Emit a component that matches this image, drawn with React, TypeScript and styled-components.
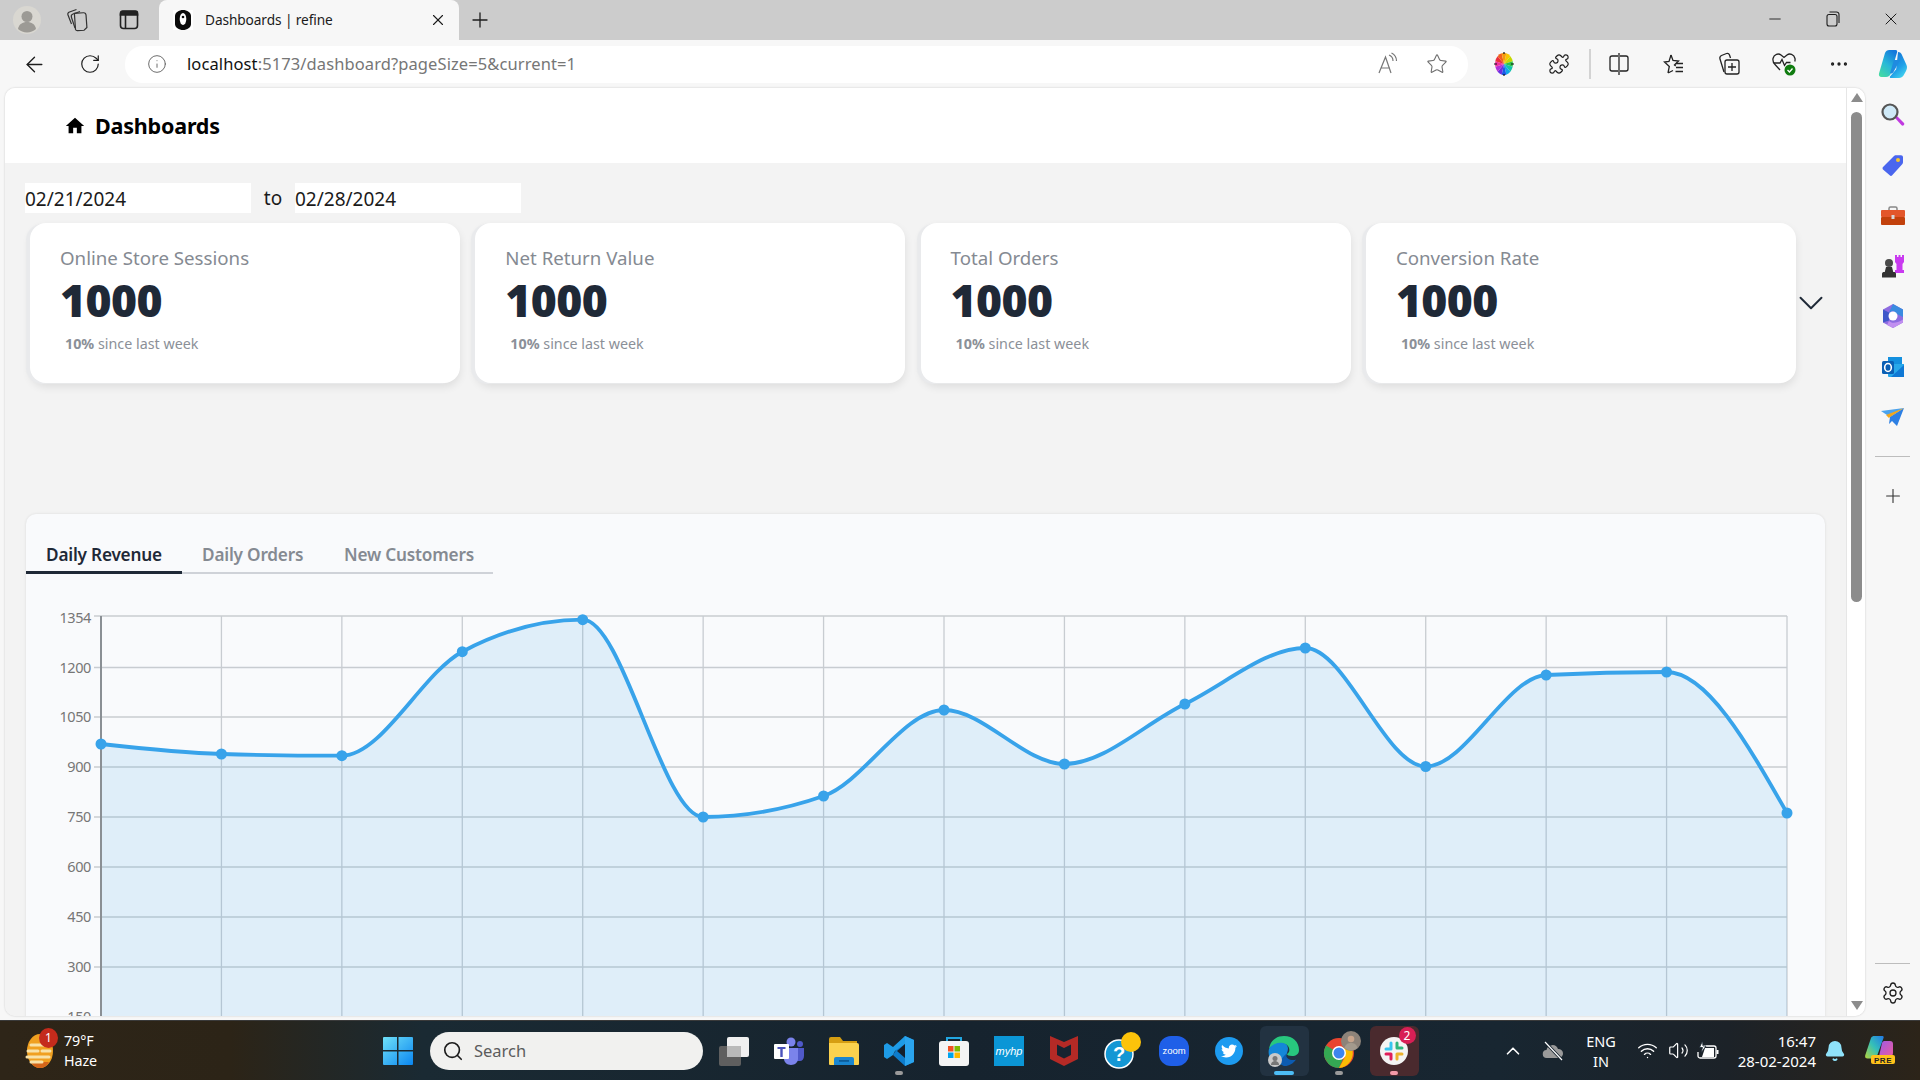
import * as React from 'react';
import styled, { createGlobalStyle } from 'styled-components';
import {
  ArrowLeft, RotateCw, Info, Star, Plus, X, Minus, MoreHorizontal, Search, ChevronDown,
  ChevronUp, Settings, Wifi, Volume2, Bell, Puzzle,
} from 'lucide-react';
import { MdHome } from 'react-icons/md';
import { FaTwitter } from 'react-icons/fa';

const UI_FONT = `"Noto Sans", "Open Sans", "Liberation Sans", sans-serif`;

const GlobalStyle = createGlobalStyle`
  html, body { margin: 0; padding: 0; overflow: hidden; background: #f7f7f7; }
  * { box-sizing: border-box; }
  body { font-family: ${UI_FONT}; }
`;

const Desktop = styled.div`
  width: 1920px;
  height: 1080px;
  display: flex;
  flex-direction: column;
  overflow: hidden;
`;

/* browser chrome */
const TabStrip = styled.div`
  height: 40px;
  flex: none;
  display: flex;
  background: #cccccc;
`;

const Slot = styled.div<{ $w: number }>`
  width: ${(p) => p.$w}px;
  flex: none;
  display: flex;
  align-items: center;
  justify-content: center;
  color: #1d1d1d;
`;

const BrowserTab = styled.div`
  width: 300px;
  margin-left: 1px;
  display: flex;
  align-items: center;
  padding: 0 12px 0 14px;
  background: #f7f7f7;
  border-radius: 8px 8px 0 0;
`;

const TabTitle = styled.span`
  flex: 1;
  margin-left: 12px;
  padding-bottom: 2px;
  font-size: 13.7px;
  color: #1b1b1b;
  letter-spacing: -0.1px;
`;

const WindowControls = styled.div`
  margin-left: auto;
  display: flex;
  padding-bottom: 3px;
`;

const Toolbar = styled.div`
  height: 48px;
  flex: none;
  display: flex;
  align-items: center;
  padding-left: 7px;
  background: #f7f7f7;
`;

const AddressBar = styled.div`
  width: 1343px;
  height: 37px;
  margin: 0 8.5px 0 8px;
  display: flex;
  align-items: center;
  padding: 0 6px 0 22px;
  background: #ffffff;
  border-radius: 18px;
`;

const Url = styled.div`
  flex: 1;
  margin-left: 20px;
  padding-bottom: 2px;
  font-size: 16.5px;
  letter-spacing: 0.1px;
  color: #767676;
  span { color: #111111; }
`;

const AddressAction = styled.div`
  width: 49px;
  display: flex;
  justify-content: center;
  color: #6e6e6e;
`;

const ToolbarDivider = styled.div`
  width: 5px;
  height: 30px;
  flex: none;
  display: flex;
  justify-content: flex-end;
  &::after {
    content: '';
    width: 2px;
    background: #d3d3d3;
  }
`;

/* main area */
const Main = styled.div`
  flex: 1;
  min-height: 0;
  display: flex;
  padding-left: 5px;
  background: #f7f7f7;
`;

const Viewport = styled.div`
  width: 1860px;
  height: 928px;
  flex: none;
  display: flex;
  overflow: hidden;
  border-radius: 10px;
  box-shadow: 0 0 2px rgba(0, 0, 0, 0.22);
`;

const Page = styled.div`
  width: 1841px;
  flex: none;
  background: #f3f3f3;
  overflow: hidden;
`;

const PageHeader = styled.header`
  height: 75px;
  display: flex;
  align-items: center;
  gap: 9px;
  padding-left: 59px;
  background: #ffffff;
  color: #000000;
`;

const PageTitle = styled.h1`
  margin: 0;
  font-size: 21.5px;
  font-weight: 700;
  letter-spacing: -0.2px;
`;

const PageBody = styled.main`
  padding: 20px 0 0 20px;
`;

const DateRow = styled.div`
  display: flex;
  align-items: center;
  height: 30px;
`;

const DateField = styled.div`
  width: 226px;
  height: 30px;
  line-height: 32px;
  background: #ffffff;
  font-size: 19px;
  color: #1b1b1b;
`;

const DateSeparator = styled.span`
  width: 44px;
  text-align: center;
  font-size: 19px;
  line-height: 32px;
  color: #1b1b1b;
`;

const StatsRow = styled.div`
  display: flex;
  align-items: center;
  gap: 15.3px;
  margin: 10px 0 0 5px;
`;

const StatCard = styled.section`
  width: 430px;
  height: 160px;
  flex: none;
  padding: 22px 0 0 30px;
  background: #ffffff;
  border-radius: 16px;
  box-shadow: -4px 1px 1px #e9eaec, 0 4px 9px rgba(0, 0, 0, 0.09);
`;

const StatTitle = styled.div`
  height: 26px;
  line-height: 26px;
  font-size: 18.7px;
  color: #858a92;
`;

const StatValue = styled.div`
  height: 52px;
  margin-top: 3px;
  line-height: 52px;
  font-size: 44.5px;
  font-weight: 900;
  letter-spacing: -0.6px;
  color: #1f2937;
`;

const StatNote = styled.div`
  height: 20px;
  margin: 8px 0 0 5px;
  line-height: 20px;
  font-size: 14.3px;
  color: #8b9098;
  b { font-weight: 700; }
`;

const StatsToggle = styled.div`
  width: 24px;
  margin-left: -12.5px;
  display: flex;
  justify-content: center;
  color: #1f2937;
  svg { flex: none; }
`;

const ChartCard = styled.section`
  width: 1799px;
  height: 560px;
  margin: 131px 0 0 1px;
  padding-top: 20px;
  background: #f9fafc;
  border-radius: 10px;
  box-shadow: 0 0 3px rgba(0, 0, 0, 0.1);
`;

const TabList = styled.div`
  width: 467px;
  height: 40px;
  display: flex;
  border-bottom: 2px solid #cfd2d8;
`;

const ChartTab = styled.div<{ $active?: boolean; $w: number }>`
  width: ${(p) => p.$w}px;
  height: 40px;
  flex: none;
  padding-left: 20px;
  line-height: 41px;
  white-space: nowrap;
  font-size: 17.2px;
  font-weight: 600;
  letter-spacing: -0.2px;
  color: ${(p) => (p.$active ? '#1f2937' : '#858a92')};
  border-bottom: 3px solid ${(p) => (p.$active ? '#1f2937' : 'transparent')};
`;

const ChartWrap = styled.div`
  margin-top: 22px;
  svg { display: block; }
`;

/* scrollbar + edge sidebar */
const ScrollTrack = styled.div`
  position: relative;
  width: 19px;
  flex: none;
  background: #ffffff;
  border-left: 1px solid #e6e6e6;
`;

const ScrollArrow = styled.div<{ $down?: boolean }>`
  position: absolute;
  left: 4px;
  ${(p) => (p.$down ? 'bottom: 6px;' : 'top: 5px;')}
  width: 0;
  height: 0;
  border-left: 6px solid transparent;
  border-right: 6px solid transparent;
  ${(p) => (p.$down ? 'border-top: 9px solid #8c8c8c;' : 'border-bottom: 9px solid #8c8c8c;')}
`;

const ScrollThumb = styled.div`
  position: absolute;
  top: 24px;
  left: 4px;
  width: 11px;
  height: 490px;
  border-radius: 6px;
  background: #8c8c8c;
`;

const EdgeSidebar = styled.aside`
  width: 55px;
  flex: none;
  display: flex;
  flex-direction: column;
  align-items: center;
  padding: 2px 0;
`;

const SideItem = styled.div`
  height: 50.3px;
  flex: none;
  display: flex;
  align-items: center;
  justify-content: center;
`;

const SideDivider = styled.div<{ $last?: boolean }>`
  width: 35px;
  height: 1px;
  flex: none;
  margin: ${(p) => (p.$last ? 'auto 0 4px' : '14px 0 14px')};
  background: #bdbdbd;
`;

/* taskbar */
const Taskbar = styled.footer`
  height: 60px;
  flex: none;
  display: flex;
  align-items: center;
  border-top: 1px solid #3a3a3a;
  color: #ffffff;
  background: linear-gradient(90deg, #2e2518 0%, #2c2417 12%, #1a2a33 22%, #16232e 50%, #182631 78%, #1c2228 90%, #2c2419 100%);
`;

const Weather = styled.div`
  position: relative;
  width: 370px;
  flex: none;
  height: 59px;
  display: flex;
  align-items: center;
  padding-left: 25px;
  gap: 11px;
`;

const WeatherBadge = styled.span`
  position: absolute;
  left: 39px;
  top: 7px;
  width: 19px;
  height: 20px;
  border-radius: 50%;
  background: #c42b1c;
  font-size: 12px;
  line-height: 20px;
  text-align: center;
`;

const WeatherText = styled.div`
  font-size: 14.3px;
  line-height: 20px;
  letter-spacing: -0.1px;
`;

const SearchPill = styled.div`
  width: 273px;
  height: 38px;
  flex: none;
  margin: 0 3.5px 0 5px;
  display: flex;
  align-items: center;
  gap: 10px;
  padding-left: 12px;
  border-radius: 19px;
  background: #f1f1ef;
  color: #1c1c1c;
  font-size: 16.5px;
  span { color: #5c5c5c; }
`;

const TaskItem = styled.div<{ $tile?: string; $mark?: string }>`
  position: relative;
  width: 55px;
  height: 50px;
  flex: none;
  display: flex;
  align-items: center;
  justify-content: center;
  &::before {
    content: '';
    position: absolute;
    inset: 0 3px;
    border-radius: 6px;
    background: ${(p) => p.$tile || 'transparent'};
  }
  &::after {
    content: '';
    position: absolute;
    bottom: 1px;
    left: 50%;
    width: ${(p) => (p.$tile === '#223241' ? 20 : 8)}px;
    height: 4px;
    transform: translateX(-50%);
    border-radius: 2px;
    background: ${(p) => p.$mark || 'transparent'};
  }
  svg { position: relative; flex: none; }
`;

const SlackBadge = styled.span`
  position: absolute;
  top: 1px;
  right: 6px;
  width: 17px;
  height: 17px;
  border-radius: 50%;
  background: #d81f55;
  font-size: 12px;
  line-height: 17px;
  text-align: center;
`;

const Tray = styled.div`
  margin-left: 68.5px;
  display: flex;
  align-items: center;
  color: #ffffff;
`;

const TrayItem = styled.div<{ $w: number }>`
  width: ${(p) => p.$w}px;
  flex: none;
  display: flex;
  align-items: center;
  justify-content: center;
`;

const TrayText = styled.div<{ $w: number; $right?: boolean }>`
  width: ${(p) => p.$w}px;
  flex: none;
  font-size: ${(p) => (p.$right ? 15 : 14.5)}px;
  line-height: 20px;
  white-space: nowrap;
  text-align: ${(p) => (p.$right ? 'right' : 'center')};
`;

/* drawings */
const Avatar = () => (
  <svg width="28" height="28" viewBox="0 0 28 28">
    <circle cx="14" cy="14" r="14" fill="#d9d7d1" />
    <circle cx="14" cy="10.5" r="5.5" fill="#9c9a95" />
    <path d="M5 23c1-5 4.5-7 9-7s8 2 9 7a13.5 13.5 0 0 1-18 0z" fill="#9c9a95" />
  </svg>
);

const WorkspacesIcon = () => (
  <svg width="22" height="24" viewBox="0 0 22 24" fill="none" stroke="#333" strokeWidth="1.2">
    <path d="M9 5h9a2.500 2.500 0 0 1 2.500 2.500V20l-3 2.500H11a2 2 0 0 1-2-1.500z" transform="rotate(-4 14 14)" />
    <path d="M9 20 5.500 9.500C5 8 5.500 6.500 7 6l7-2.500" />
    <path d="M5.500 16 2 7C1.500 5.500 2 4.500 3.500 4l7-2.500" />
  </svg>
);

const TabsIcon = () => (
  <svg width="20" height="20" viewBox="0 0 20 20" fill="none" stroke="#222" strokeWidth="1.6">
    <rect x="1.500" y="1.500" width="17" height="17" rx="3" />
    <path d="M1.500 5h17V3a2 2 0 0 0-2-2h-13a2 2 0 0 0-2 2z" fill="#222" />
    <path d="M6.500 5v13" />
  </svg>
);

const RefineLogo = () => (
  <svg width="20" height="20" viewBox="0 0 20 20">
    <rect width="20" height="20" fill="#ffffff" />
    <path d="M10 0c4 0 8 2.500 8 6v8c0 3.500-4 6-8 6s-8-2.500-8-6V6c0-3.500 4-6 8-6z" fill="#0b0b0b" />
    <ellipse cx="10" cy="9" rx="3.300" ry="6" fill="#ffffff" />
    <circle cx="10" cy="7" r="1.300" fill="#0b0b0b" />
  </svg>
);

const RestoreIcon = () => (
  <svg width="14" height="16" viewBox="0 0 14 16" fill="none" stroke="#1d1d1d" strokeWidth="1.1">
    <rect x="1" y="3.500" width="10" height="11.500" rx="2" />
    <path d="M3.500 1h7A2.500 2.500 0 0 1 13 3.500V12" />
  </svg>
);

const ReadAloudIcon = () => (
  <svg width="24" height="24" viewBox="0 0 24 24" fill="none" stroke="#777" strokeWidth="1.2">
    <path d="M3 21 9.500 5 15 21M5 16h9" />
    <path d="M13 3c2.500 1 4 3 4 6M15.500 1c3 1.500 5 4 5 8" />
  </svg>
);

const WHEEL = ['#f7c600', '#c4d800', '#2fc24a', '#11c5a8', '#11a8e8', '#1a5ae8', '#6a2fe0', '#b52fd6', '#f032a0', '#ea2f3c', '#f2601c', '#f59a0a'];

const ColorWheel = () => (
  <svg width="20" height="24" viewBox="-10 -12 20 24">
    {WHEEL.map((c, i) => {
      const a0 = (i * Math.PI) / 6 - Math.PI / 2 + Math.PI / 12;
      const a1 = a0 + Math.PI / 6;
      const pt = (a: number) => `${9 * Math.cos(a)} ${11 * Math.sin(a)}`;
      return <path key={c} d={`M0 0L${pt(a0)}A9 11 0 0 1 ${pt(a1)}Z`} fill={c} />;
    })}
    <path d="M-10 0h3M7 0h3M0-12v2M0 10v2" stroke="#111" strokeWidth="1.200" />
  </svg>
);

const SplitIcon = () => (
  <svg width="20" height="24" viewBox="0 0 20 24" fill="none" stroke="#222" strokeWidth="1.3">
    <path d="M9 4H3a2 2 0 0 0-2 2v11a2 2 0 0 0 2 2h6M11 4h6a2 2 0 0 1 2 2v11a2 2 0 0 1-2 2h-6" />
    <path d="M10 1v22" />
  </svg>
);

const FavoritesIcon = () => (
  <svg width="22" height="22" viewBox="0 0 22 22" fill="none" stroke="#222" strokeWidth="1.3">
    <path d="m8 2 2 5.500 5.500.5-4 4 1.200 1M5 20l1.300-6.500L1.500 9 6 8.500 8 2M5 20l5-2.500" />
    <path d="M13 10.500h7M13 14.500h7M12.500 18.500h7.500" />
  </svg>
);

const CollectionsIcon = () => (
  <svg width="22" height="24" viewBox="0 0 22 24" fill="none" stroke="#222" strokeWidth="1.3">
    <path d="M6 20 2 7c-.4-1.500.3-3 1.500-3.500l5-2c1.300-.4 2.500.2 3 1.500l1 3" />
    <rect x="7" y="8" width="14" height="14" rx="2" />
    <path d="M14 11v8M10 15h8" />
  </svg>
);

const HealthIcon = () => (
  <svg width="24" height="26" viewBox="0 0 24 26">
    <path d="M8 19 3 13.500C1 11.500.7 9.500 1 7.500 2 3 6.500 2 9 4l3 2.500L15 4c2.500-2 7-1 8 3.500.2 1.200.1 2-.2 3" fill="none" stroke="#222" strokeWidth="1.300" />
    <path d="M2 12h6l2-3.500 2.500 6 2-3h4" fill="none" stroke="#222" strokeWidth="1.300" />
    <circle cx="18" cy="19" r="5.500" fill="#107c10" />
    <path d="m15.500 19 2 2 3-3.500" fill="none" stroke="#ffffff" strokeWidth="1.300" />
  </svg>
);

const Copilot = ({ size = 30 }: { size?: number }) => (
  <svg width={size} height={size} viewBox="0 0 30 30">
    <defs>
      <linearGradient id="cpA" x1="0.1" y1="1" x2="0.7" y2="0">
        <stop offset="0" stopColor="#46dca0" />
        <stop offset="0.5" stopColor="#28b8d8" />
        <stop offset="1" stopColor="#1378dc" />
      </linearGradient>
      <linearGradient id="cpB" x1="0.2" y1="0" x2="0.8" y2="1">
        <stop offset="0" stopColor="#1470d4" />
        <stop offset="0.6" stopColor="#1f9fe8" />
        <stop offset="1" stopColor="#46d8ee" />
      </linearGradient>
    </defs>
    <path d="M7 4c.8-2 2.300-3 4.300-3h6.500c1.200 0 1.700 1 1.300 2.200L13 24c-.8 2.500-2.500 4-5 4H3.500C1.500 28 .5 26.500 1 24.500z" fill="url(#cpA)" />
    <path d="M20 3c1.700 0 2.800.8 3.500 2l5 11c.9 2 .5 4-.5 6l-2.500 4.500C24.500 28 23 29 21 29h-8c-1.200 0-1.600-1-.8-1.800l6-7z" fill="url(#cpB)" />
    <path d="M16 11h6l-6.500 12c-1 1.500-2.500 2-3.500 1z" fill="#1f8be0" />
  </svg>
);

const CopilotPre = () => (
  <svg width="30" height="30" viewBox="0 0 30 30">
    <defs>
      <linearGradient id="cpP" x1="0" y1="1" x2="1" y2="0">
        <stop offset="0" stopColor="#b6d63a" />
        <stop offset="0.5" stopColor="#35c0b8" />
        <stop offset="1" stopColor="#2178e6" />
      </linearGradient>
      <linearGradient id="cpQ" x1="0" y1="0" x2="1" y2="1">
        <stop offset="0" stopColor="#9a5be8" />
        <stop offset="1" stopColor="#f05a9c" />
      </linearGradient>
    </defs>
    <path d="M6 2c.7-1.500 2-2 3.500-2H17c1.500 0 2 1 1.500 2L12 20c-.5 1.500-2 2.500-3.500 2.500H2.500C.5 22.500-.3 21 .3 19z" fill="url(#cpP)" />
    <path d="M17 7c.5-1.500 1.500-2 3-2h5c2 0 3 1 3 3v8c0 4-2 6.500-5 6.500h-9.500z" fill="url(#cpQ)" />
    <rect x="6" y="19" width="24" height="9" rx="2" fill="#ffc21a" />
    <text x="18" y="26.500" textAnchor="middle" fontSize="8" fontWeight="800" letterSpacing="0.6" fill="#222" fontFamily="Liberation Sans, sans-serif">PRE</text>
  </svg>
);

const SearchTool = () => (
  <svg width="24" height="24" viewBox="0 0 24 24">
    <path d="m14 15 2-2 7 7c.5.8.3 1.500-.3 2.200-.7.600-1.500.6-2.100 0z" fill="#c03ae0" />
    <circle cx="9" cy="9" r="7.500" fill="#cfe9f7" stroke="#555" strokeWidth="2.200" />
  </svg>
);

const TagTool = () => (
  <svg width="22" height="22" viewBox="0 0 22 22">
    <path d="M1 13 12 2c.5-.5 1-.7 2-.7h5c1.200 0 2 .8 2 2v5c0 .8-.2 1.500-.8 2l-10 11c-.7.8-1.800.8-2.500 0L1 15.500c-.6-.7-.6-1.800 0-2.500z" fill="#4a66ee" />
    <circle cx="16" cy="6" r="2" fill="#f4c430" />
  </svg>
);

const ToolboxTool = () => (
  <svg width="24" height="20" viewBox="0 0 24 20">
    <path d="M8 5V2.500C8 1.500 8.500 1 9.500 1h5c1 0 1.500.5 1.500 1.500V5" fill="none" stroke="#888" strokeWidth="1.500" />
    <rect y="4" width="24" height="7" rx="1" fill="#e3562a" />
    <rect y="11" width="24" height="8" rx="1" fill="#c2410c" />
    <rect x="10.500" y="9" width="3" height="4" fill="#d8d8d8" />
  </svg>
);

const ChessTool = () => (
  <svg width="24" height="24" viewBox="0 0 24 24">
    <path d="M14 1h2v2h1.500V1h2v2H21V1h2v7l-1.500 2v6H23v3h-9v-3h1.500v-6L14 8z" fill="#c93af0" />
    <circle cx="8" cy="9" r="4" fill="#4a4a4a" />
    <path d="M5 13h6l1.500 6h-9zM1 20c0-1.500 1-2 2-2h10c1 0 2 .5 2 2v3.500H1z" fill="#333" />
  </svg>
);

const OfficeTool = () => (
  <svg width="22" height="24" viewBox="0 0 22 24">
    <path d="M11 0 21 5.500v13L11 24 1 18.500v-13z" fill="#8d6ce0" />
    <path d="M11 0 21 5.500V13l-6-3-4-3-4 1.500L11 0z" fill="#3a8be0" />
    <path d="M1 5.500 7 8.500v8l-6 2z" fill="#3f57c9" />
    <path d="M7 17c3 3 8 2 14-1.500v3L11 24l-6-3z" fill="#c18ff0" />
    <circle cx="11" cy="12" r="4.500" fill="#ffffff" />
  </svg>
);

const OutlookTool = () => (
  <svg width="22" height="22" viewBox="0 0 22 22">
    <rect x="6" y="1" width="14" height="8" fill="#1490df" />
    <path d="M6 8h16v13H7a1 1 0 0 1-1-1z" fill="#28a8ea" />
    <path d="M22 9v12H9z" fill="#0f78d4" />
    <rect y="5" width="12" height="13" rx="1.500" fill="#0a5fb4" />
    <ellipse cx="6" cy="11.500" rx="3.300" ry="4" fill="none" stroke="#ffffff" strokeWidth="1.600" />
  </svg>
);

const SendTool = () => (
  <svg width="24" height="20" viewBox="0 0 24 20">
    <path d="M0 4 23 1 9 10z" fill="#4ba3ee" />
    <path d="M23 1 16 19l-5-5-3 3 1-7z" fill="#2d7fe3" />
    <path d="M23 1 5 8l3 3 1-1z" fill="#f2a71b" />
  </svg>
);

const WeatherIcon = () => (
  <svg width="28" height="38" viewBox="0 0 28 38">
    <ellipse cx="15" cy="19" rx="13" ry="17" fill="#f0a020" />
    <path d="M6 30h18c-2 4-5 6-9 6s-7-2-9-6z" fill="#d4651a" />
    <path d="M6 13h17M3 19h10M17 19h8M2 25h22M6 30h11" stroke="#f8e2a8" strokeWidth="3" strokeLinecap="round" />
  </svg>
);

const StartLogo = () => (
  <svg width="30" height="30" viewBox="0 0 30 30">
    <defs>
      <linearGradient id="startG" x1="0" y1="0" x2="1" y2="1">
        <stop offset="0" stopColor="#6fe0f8" />
        <stop offset="1" stopColor="#0a86f0" />
      </linearGradient>
    </defs>
    <path d="M1 1h13v13H0V2a1 1 0 0 1 1-1zM15.500 1H29a1 1 0 0 1 1 1v12H15.500zM0 15.500h14V29H1a1 1 0 0 1-1-1zM15.500 15.500H30V28a1 1 0 0 1-1 1H15.500z" fill="url(#startG)" />
  </svg>
);

const TaskViewIcon = () => (
  <svg width="32" height="30" viewBox="0 0 32 30">
    <rect x="1" y="10" width="22" height="20" rx="2" fill="#5f5f5f" />
    <rect x="9" y="1" width="22" height="20" rx="2" fill="#f0f0f0" />
    <rect x="9" y="10" width="14" height="11" fill="#b9b9b9" />
  </svg>
);

const TeamsIcon = () => (
  <svg width="30" height="28" viewBox="0 0 30 28">
    <circle cx="17" cy="5" r="4.500" fill="#7b83eb" />
    <circle cx="26" cy="7" r="3" fill="#5059c9" />
    <path d="M22 11h8v8c0 3-2 5-4 5h-4z" fill="#5059c9" />
    <path d="M10 11h14v11c0 3-3 6-7 6s-7-3-7-6z" fill="#7b83eb" />
    <rect y="7" width="15" height="15" rx="1" fill="#ffffff" />
    <path d="M3.500 10h8v2H8.700v8H6.300v-8H3.500z" fill="#4b53bc" />
  </svg>
);

const FolderIcon = () => (
  <svg width="30" height="30" viewBox="0 0 30 30">
    <path d="M0 3a2 2 0 0 1 2-2h9l3 4h14v5H0z" fill="#d69e12" />
    <path d="M0 7h28a2 2 0 0 1 2 2v19a1 1 0 0 1-1 1H1a1 1 0 0 1-1-1z" fill="#fbd24e" />
    <path d="M7 21h16a2 2 0 0 1 2 2v6H5v-6a2 2 0 0 1 2-2z" fill="#1a86d0" />
    <rect x="10" y="24" width="10" height="1.800" fill="#0c5c99" />
  </svg>
);

const VSCodeIcon = () => (
  <svg width="30" height="30" viewBox="0 0 30 30">
    <path d="M21 0 30 4v22l-9 4-12-11z" fill="#0d7ccc" />
    <path d="M21 0 9 11 3 7 0 9v12l3 2 6-4 2-4 10-7z" fill="#1e9be6" />
    <path d="M21 8v14l-8-7z" fill="#14202c" />
    <path d="M21 0 30 4v22l-9 4z" fill="#2aa4ee" />
  </svg>
);

const StoreIcon = () => (
  <svg width="30" height="30" viewBox="0 0 30 30">
    <path d="M8 5V2h14v3" fill="none" stroke="#22a6e0" strokeWidth="2" />
    <rect y="5" width="30" height="25" rx="3" fill="#f4f4f4" />
    <rect x="9" y="10" width="5.500" height="5.500" fill="#f25022" />
    <rect x="15.500" y="10" width="5.500" height="5.500" fill="#7fba00" />
    <rect x="9" y="16.500" width="5.500" height="5.500" fill="#00a4ef" />
    <rect x="15.500" y="16.500" width="5.500" height="5.500" fill="#ffb900" />
  </svg>
);

const MyHpIcon = () => (
  <svg width="30" height="30" viewBox="0 0 30 30">
    <rect width="30" height="30" fill="#0b96d6" />
    <text x="15" y="19" textAnchor="middle" fontSize="11" fontStyle="italic" fill="#ffffff" fontFamily="Liberation Sans, sans-serif">myhp</text>
  </svg>
);

const McAfeeIcon = () => (
  <svg width="28" height="30" viewBox="0 0 28 30">
    <path d="M0 0 14 6 28 0v23l-14 7L0 23z" fill="#b52a26" />
    <path d="M7 8.500 14 12l7-3.500V19l-7 3.500L7 19z" fill="#172330" />
  </svg>
);

const HelpIcon = () => (
  <svg width="52" height="46" viewBox="0 0 52 46">
    <circle cx="26" cy="26" r="14" fill="#1497d4" stroke="#ffffff" strokeWidth="1.500" />
    <text x="26" y="33" textAnchor="middle" fontSize="20" fontWeight="700" fill="#ffffff" fontFamily="Liberation Sans, sans-serif">?</text>
    <circle cx="38" cy="14" r="10" fill="#fcc30a" />
  </svg>
);

const ZoomIcon = () => (
  <svg width="30" height="30" viewBox="0 0 30 30">
    <rect width="30" height="30" rx="12" fill="#1f5fe8" />
    <text x="15" y="18" textAnchor="middle" fontSize="9.500" fill="#ffffff" fontFamily="Liberation Sans, sans-serif">zoom</text>
  </svg>
);

const TwitterIcon = () => (
  <svg width="28" height="28" viewBox="0 0 28 28">
    <circle cx="14" cy="14" r="14" fill="#1d9bf0" />
    <FaTwitter x="6" y="6" size={16} color="#ffffff" />
  </svg>
);

const PersonBadge = ({ x, y }: { x: number; y: number }) => (
  <g transform={`translate(${x} ${y})`}>
    <circle r="7" fill="#c9c9c9" />
    <circle cy="-1.500" r="2.500" fill="#777" />
    <path d="M-4 5c0-3 2-4 4-4s4 1 4 4z" fill="#777" />
  </g>
);

const EdgeIcon = () => (
  <svg width="32" height="32" viewBox="0 0 32 32">
    <path d="M1 14C2 6 8 1 16 1c9 0 15 6 15 14 0 4-3 6-7 6-3 0-5-1-5-2 3-2 3-5 1-8-3-3-9-3-13-1-3 1-5 3-6 4z" fill="#28c77e" />
    <path d="M1 14c3-5 9-7 14-6 5 1 6 5 4 10-1 3-2 6-1 8-3 5-11 5-15-1-2-3-3-7-2-11z" fill="#1487d8" />
    <path d="M18 19c0 4 3 6 7 6 1 0 2 0 3-.5C25 29 20 31.500 16 31c-4-1-5-6 2-12z" fill="#0c5bb0" />
    <PersonBadge x={7} y={25} />
  </svg>
);

const ChromeIcon = () => (
  <svg width="52" height="46" viewBox="-26 -25 52 46">
    <circle r="15" fill="#e8452f" />
    <path d="M0 0-13 7.500A15 15 0 0 1-13-7.500z" fill="#34a853" />
    <path d="M0 15A15 15 0 0 1-13 7.500L-6 3 4 6z" fill="#34a853" />
    <path d="M0-5H13A15 15 0 0 1 0 15L6 4z" fill="#fbbc04" />
    <circle r="7" fill="#ffffff" />
    <circle r="5.500" fill="#3d85ee" />
    <circle cx="12" cy="-12" r="10" fill="#8d8379" />
    <circle cx="12" cy="-14" r="3.300" fill="#c9a58c" />
    <path d="M5.500-5c1-4 3.500-5 6.500-5s5.500 1 6.500 5a10 10 0 0 1-13 0z" fill="#a39a8d" />
  </svg>
);

const SlackIcon = () => (
  <svg width="28" height="28" viewBox="0 0 28 28">
    <circle cx="14" cy="14" r="14" fill="#f4f4f4" />
    <path d="M11 6v6M6 12h5" stroke="#36c5f0" strokeWidth="3" strokeLinecap="round" fill="none" />
    <path d="M22 11h-5M17 6v5" stroke="#2eb67d" strokeWidth="3" strokeLinecap="round" fill="none" />
    <path d="M17 22v-5M22 17h-5" stroke="#ecb22e" strokeWidth="3" strokeLinecap="round" fill="none" />
    <path d="M6 17h5M11 22v-5" stroke="#e01e5a" strokeWidth="3" strokeLinecap="round" fill="none" />
  </svg>
);

const CloudOff = () => (
  <svg width="22" height="20" viewBox="0 0 22 20">
    <path d="M5 17a4 4 0 0 1-.5-8 6 6 0 0 1 11.500-1 4.500 4.500 0 0 1 1 9z" fill="#9a9a9a" />
    <path d="m3 1 17 18" stroke="#16232e" strokeWidth="3" />
    <path d="m3 1 17 18" stroke="#ffffff" strokeWidth="1.200" />
  </svg>
);

const BatteryIcon = () => (
  <svg width="22" height="20" viewBox="0 0 22 20" fill="none" stroke="#ffffff" strokeWidth="1.300">
    <path d="M6 5h11a2 2 0 0 1 2 2v8a2 2 0 0 1-2 2H3a2 2 0 0 1-2-2v-4" />
    <rect x="19.500" y="9" width="2" height="4" fill="#ffffff" stroke="none" />
    <path d="M5 16h12V7H8z" fill="#ffffff" stroke="none" />
    <path d="M5.500 0 2.500 6.500h3L4 12l5-7H6z" fill="#ffffff" stroke="#16232e" strokeWidth="0.800" />
  </svg>
);

/* chart */
const TICKS = [
  { label: '1354', y: 616, labelY: 623 },
  { label: '1200', y: 667.5, labelY: 673 },
  { label: '1050', y: 717, labelY: 722 },
  { label: '900', y: 767, labelY: 772 },
  { label: '750', y: 817, labelY: 822 },
  { label: '600', y: 867, labelY: 872 },
  { label: '450', y: 917, labelY: 922 },
  { label: '300', y: 967, labelY: 972 },
  { label: '150', y: 1017, labelY: 1022 },
];

const PLOT_LEFT = 101;
const PLOT_RIGHT = 1787;
const STEP = (PLOT_RIGHT - PLOT_LEFT) / 14;
const POINT_Y = [744, 754, 755.7, 651.7, 619.7, 817, 796, 710, 764, 704, 648, 766.5, 675, 672, 813];
const POINTS = POINT_Y.map((y, i) => ({ x: PLOT_LEFT + i * STEP, y }));

// monotone cubic through the points, same idea as d3's curveMonotoneX
const monotonePath = (pts: { x: number; y: number }[]) => {
  const n = pts.length;
  const d = pts.slice(1).map((p, i) => (p.y - pts[i].y) / (p.x - pts[i].x));
  const m = pts.map((_, i) => {
    if (i === 0 || i === n - 1) return 0;
    if (d[i - 1] * d[i] <= 0) return 0;
    const s = Math.sign(d[i - 1]);
    return s * Math.min(2 * Math.abs(d[i - 1]), 2 * Math.abs(d[i]), Math.abs((d[i - 1] + d[i]) / 2));
  });
  m[0] = (3 * d[0] - m[1]) / 2;
  m[n - 1] = (3 * d[n - 2] - m[n - 2]) / 2;
  let path = `M${pts[0].x} ${pts[0].y}`;
  for (let i = 0; i < n - 1; i++) {
    const h = (pts[i + 1].x - pts[i].x) / 3;
    path += `C${pts[i].x + h} ${pts[i].y + h * m[i]} ${pts[i + 1].x - h} ${pts[i + 1].y - h * m[i + 1]} ${pts[i + 1].x} ${pts[i + 1].y}`;
  }
  return path;
};

const RevenueChart = () => {
  const line = monotonePath(POINTS);
  return (
    <svg width="1799" height="450" viewBox="26 596 1799 450">
      {TICKS.map((t) => (
        <g key={t.label}>
          <line x1={94} x2={PLOT_RIGHT} y1={t.y} y2={t.y} stroke="#c8ccd1" strokeWidth="1.3" />
          <text x={91} y={t.labelY} textAnchor="end" fontSize="14.5" fill="#767676" fontFamily="Noto Sans, sans-serif" letterSpacing="-0.4">
            {t.label}
          </text>
        </g>
      ))}
      {POINTS.map((p, i) => (
        <line key={i} x1={p.x} x2={p.x} y1={616} y2={1046} stroke="#c8ccd1" strokeWidth="1.3" />
      ))}
      <path d={`${line}L${PLOT_RIGHT} 1046L${PLOT_LEFT} 1046Z`} fill="rgba(56,163,234,0.13)" />
      <line x1={PLOT_LEFT} x2={PLOT_LEFT} y1={616} y2={1046} stroke="#8a8f94" strokeWidth="2" />
      <path d={line} fill="none" stroke="#38a3ea" strokeWidth="3.8" />
      {POINTS.map((p, i) => (
        <circle key={i} cx={p.x} cy={p.y} r="5.5" fill="#38a3ea" />
      ))}
    </svg>
  );
};

const STATS = ['Online Store Sessions', 'Net Return Value', 'Total Orders', 'Conversion Rate'];

const App = () => (
  <Desktop>
    <GlobalStyle />
    <TabStrip>
      <Slot $w={54}><Avatar /></Slot>
      <Slot $w={46}><WorkspacesIcon /></Slot>
      <Slot $w={58}><TabsIcon /></Slot>
      <BrowserTab>
        <RefineLogo />
        <TabTitle>Dashboards | refine</TabTitle>
        <X size={18} strokeWidth={1.5} color="#1b1b1b" />
      </BrowserTab>
      <Slot $w={42}><Plus size={24} strokeWidth={1.3} /></Slot>
      <WindowControls>
        <Slot $w={58}><Minus size={18} strokeWidth={1.2} /></Slot>
        <Slot $w={58}><RestoreIcon /></Slot>
        <Slot $w={58}><X size={20} strokeWidth={1.2} /></Slot>
      </WindowControls>
    </TabStrip>
    <Toolbar>
      <Slot $w={55}><ArrowLeft size={25} strokeWidth={1.3} /></Slot>
      <Slot $w={55}><RotateCw size={22} strokeWidth={1.3} /></Slot>
      <AddressBar>
        <Info size={20} strokeWidth={1.1} color="#5f5f5f" />
        <Url><span>localhost</span>:5173/dashboard?pageSize=5&amp;current=1</Url>
        <AddressAction><ReadAloudIcon /></AddressAction>
        <AddressAction><Star size={22} strokeWidth={1.2} /></AddressAction>
      </AddressBar>
      <Slot $w={55}><ColorWheel /></Slot>
      <Slot $w={55}><Puzzle size={22} strokeWidth={1.3} /></Slot>
      <ToolbarDivider />
      <Slot $w={55}><SplitIcon /></Slot>
      <Slot $w={55}><FavoritesIcon /></Slot>
      <Slot $w={55}><CollectionsIcon /></Slot>
      <Slot $w={55}><HealthIcon /></Slot>
      <Slot $w={55}><MoreHorizontal size={22} strokeWidth={1.6} /></Slot>
      <Slot $w={54}><Copilot /></Slot>
    </Toolbar>
    <Main>
      <Viewport>
        <Page>
          <PageHeader>
            <MdHome size={22} />
            <PageTitle>Dashboards</PageTitle>
          </PageHeader>
          <PageBody>
            <DateRow>
              <DateField>02/21/2024</DateField>
              <DateSeparator>to</DateSeparator>
              <DateField>02/28/2024</DateField>
            </DateRow>
            <StatsRow>
              {STATS.map((title) => (
                <StatCard key={title}>
                  <StatTitle>{title}</StatTitle>
                  <StatValue>1000</StatValue>
                  <StatNote><b>10%</b> since last week</StatNote>
                </StatCard>
              ))}
              <StatsToggle><ChevronDown size={42} strokeWidth={1.1} /></StatsToggle>
            </StatsRow>
            <ChartCard>
              <TabList>
                <ChartTab $active $w={156}>Daily Revenue</ChartTab>
                <ChartTab $w={142}>Daily Orders</ChartTab>
                <ChartTab $w={169}>New Customers</ChartTab>
              </TabList>
              <ChartWrap>
                <RevenueChart />
              </ChartWrap>
            </ChartCard>
          </PageBody>
        </Page>
        <ScrollTrack>
          <ScrollArrow />
          <ScrollThumb />
          <ScrollArrow $down />
        </ScrollTrack>
      </Viewport>
      <EdgeSidebar>
        <SideItem><SearchTool /></SideItem>
        <SideItem><TagTool /></SideItem>
        <SideItem><ToolboxTool /></SideItem>
        <SideItem><ChessTool /></SideItem>
        <SideItem><OfficeTool /></SideItem>
        <SideItem><OutlookTool /></SideItem>
        <SideItem><SendTool /></SideItem>
        <SideDivider />
        <SideItem><Plus size={22} strokeWidth={1.2} color="#333" /></SideItem>
        <SideDivider $last />
        <SideItem><Settings size={24} strokeWidth={1.3} color="#1d1d1d" /></SideItem>
      </EdgeSidebar>
    </Main>
    <Taskbar>
      <Weather>
        <WeatherIcon />
        <WeatherBadge>1</WeatherBadge>
        <WeatherText>79°F<br />Haze</WeatherText>
      </Weather>
      <Slot $w={55}><StartLogo /></Slot>
      <SearchPill>
        <Search size={22} strokeWidth={1.8} />
        <span>Search</span>
      </SearchPill>
      <TaskItem><TaskViewIcon /></TaskItem>
      <TaskItem><TeamsIcon /></TaskItem>
      <TaskItem><FolderIcon /></TaskItem>
      <TaskItem $mark="#9a9a9a"><VSCodeIcon /></TaskItem>
      <TaskItem><StoreIcon /></TaskItem>
      <TaskItem><MyHpIcon /></TaskItem>
      <TaskItem><McAfeeIcon /></TaskItem>
      <TaskItem><HelpIcon /></TaskItem>
      <TaskItem><ZoomIcon /></TaskItem>
      <TaskItem><TwitterIcon /></TaskItem>
      <TaskItem $tile="#223241" $mark="#4dbdf5"><EdgeIcon /></TaskItem>
      <TaskItem $mark="#9a9a9a"><ChromeIcon /></TaskItem>
      <TaskItem $tile="#4a2a2e" $mark="#f29aa8">
        <SlackIcon />
        <SlackBadge>2</SlackBadge>
      </TaskItem>
      <Tray>
        <TrayItem $w={45}><ChevronUp size={22} strokeWidth={1.8} /></TrayItem>
        <TrayItem $w={36}><CloudOff /></TrayItem>
        <TrayText $w={60}>ENG<br />IN</TrayText>
        <TrayItem $w={32}><Wifi size={21} strokeWidth={1.6} /></TrayItem>
        <TrayItem $w={30}><Volume2 size={21} strokeWidth={1.4} /></TrayItem>
        <TrayItem $w={30}><BatteryIcon /></TrayItem>
        <TrayText $w={93} $right>16:47<br />28-02-2024</TrayText>
        <TrayItem $w={38}><Bell size={22} fill="#8fe3fb" color="#8fe3fb" /></TrayItem>
        <TrayItem $w={52}><CopilotPre /></TrayItem>
      </Tray>
    </Taskbar>
  </Desktop>
);

export default App;
